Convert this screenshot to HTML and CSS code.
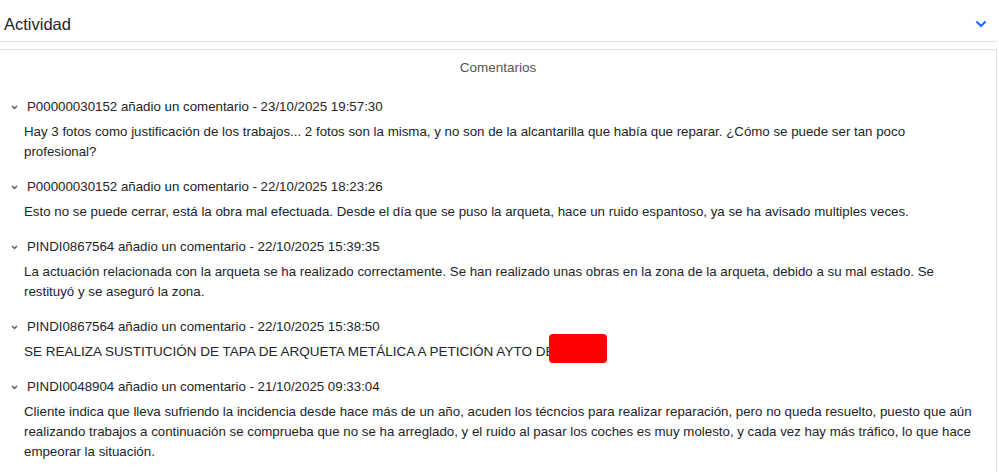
FILE: index.html
```html
<!DOCTYPE html>
<html lang="es">
<head>
    <meta charset="UTF-8">
    <title>Actividad</title>
    <link rel="stylesheet" href="styles.css">
</head>
<body>
    <div class="panel">
        <div class="panel-header">
            <span class="panel-title">Actividad</span>
            <svg class="toggle" width="12" height="8" viewBox="0 0 12 8"><path d="M1.5 1.5 6 6l4.5-4.5" fill="none" stroke="#0d6efd" stroke-width="2"/></svg>
        </div>

        <div class="panel-body">
            <div class="section-title">Comentarios</div>

            <div class="comment">
                <div class="comment-head"><svg class="caret" width="7" height="5" viewBox="0 0 7 5"><path d="M1 1l2.5 2.5L6 1" fill="none" stroke="#555" stroke-width="1.3"/></svg>P00000030152 añadio un comentario - 23/10/2025 19:57:30</div>
                <div class="comment-text">Hay 3 fotos como justificación de los trabajos... 2 fotos son la misma, y no son de la alcantarilla que había que reparar. ¿Cómo se puede ser tan poco profesional?</div>
            </div>

            <div class="comment">
                <div class="comment-head"><svg class="caret" width="7" height="5" viewBox="0 0 7 5"><path d="M1 1l2.5 2.5L6 1" fill="none" stroke="#555" stroke-width="1.3"/></svg>P00000030152 añadio un comentario - 22/10/2025 18:23:26</div>
                <div class="comment-text">Esto no se puede cerrar, está la obra mal efectuada. Desde el día que se puso la arqueta, hace un ruido espantoso, ya se ha avisado multiples veces.</div>
            </div>

            <div class="comment">
                <div class="comment-head"><svg class="caret" width="7" height="5" viewBox="0 0 7 5"><path d="M1 1l2.5 2.5L6 1" fill="none" stroke="#555" stroke-width="1.3"/></svg>PINDI0867564 añadio un comentario - 22/10/2025 15:39:35</div>
                <div class="comment-text">La actuación relacionada con la arqueta se ha realizado correctamente. Se han realizado unas obras en la zona de la arqueta, debido a su mal estado. Se restituyó y se aseguró la zona.</div>
            </div>

            <div class="comment">
                <div class="comment-head"><svg class="caret" width="7" height="5" viewBox="0 0 7 5"><path d="M1 1l2.5 2.5L6 1" fill="none" stroke="#555" stroke-width="1.3"/></svg>PINDI0867564 añadio un comentario - 22/10/2025 15:38:50</div>
                <div class="comment-text caps">SE REALIZA SUSTITUCIÓN DE TAPA DE ARQUETA METÁLICA A PETICIÓN AYTO DE<span class="redacted"></span></div>
            </div>

            <div class="comment">
                <div class="comment-head"><svg class="caret" width="7" height="5" viewBox="0 0 7 5"><path d="M1 1l2.5 2.5L6 1" fill="none" stroke="#555" stroke-width="1.3"/></svg>PINDI0048904 añadio un comentario - 21/10/2025 09:33:04</div>
                <div class="comment-text">Cliente indica que lleva sufriendo la incidencia desde hace más de un año, acuden los técncios para realizar reparación, pero no queda resuelto, puesto que aún realizando trabajos a continuación se comprueba que no se ha arreglado, y el ruido al pasar los coches es muy molesto, y cada vez hay más tráfico, lo que hace empeorar la situación.</div>
            </div>
        </div>
    </div>
</body>
</html>
```

FILE: styles.css
```css
body {
    margin: 0;
    font-family: "Liberation Sans", Arial, sans-serif;
    color: #212529;
    background-color: #fff;
}

.panel {
    width: 997px;
}

.panel-header {
    display: flex;
    justify-content: space-between;
    align-items: center;
    height: 41px;
    padding: 0 10px 0 4px;
    border-bottom: 1px solid #e3e3e3;
}

.panel-title {
    font-size: 16.5px;
    padding-top: 8px;
}

.toggle {
    margin-top: 7px;
}

.panel-body {
    margin-top: 7px;
    border-top: 1px solid #e3e3e3;
    border-right: 1px solid #e3e3e3;
    padding: 1px 18px 10px 24px;
}

.section-title {
    margin: 0 -18px 0 -24px;
    text-align: center;
    color: #555;
    font-size: 13.5px;
    padding: 9px 0 22px;
}

.comment {
    font-size: 13.3px;
    margin-bottom: 15px;
}

.comment-head {
    position: relative;
    padding-left: 3px;
    line-height: 20px;
    margin-bottom: 5px;
}

.caret {
    position: absolute;
    left: -13px;
    top: 8px;
}

.comment-text {
    line-height: 20px;
}

.caps {
    font-size: 13.5px;
}

.redacted {
    display: inline-block;
    width: 58px;
    height: 29px;
    margin: -12px 0 -4px -5px;
    vertical-align: middle;
    background-color: #f00;
    border-radius: 4px;
}
```
